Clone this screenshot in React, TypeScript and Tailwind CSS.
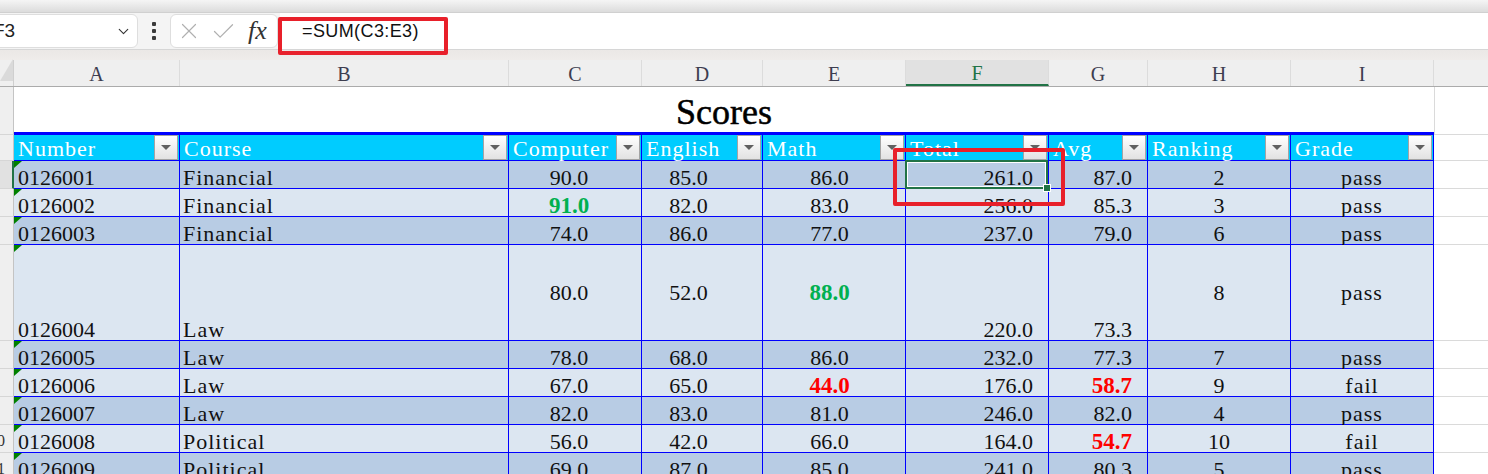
import { Check, ChevronDown, X } from "lucide-react";

type Tone = "green" | "red";
type Cell = string | { v: string; tone: Tone };

interface RowData {
  n: number;
  dark: boolean;
  tall?: boolean;
  cells: Cell[];
}

const SERIF = "font-['Liberation_Serif',serif]";

const COLS = [
  { id: "A", w: "w-[166px]", align: "justify-start pl-[4px]", mid: false },
  { id: "B", w: "w-[329px]", align: "justify-start pl-[3px]", mid: false },
  { id: "C", w: "w-[133px]", align: "justify-center pr-[12px]", mid: true },
  { id: "D", w: "w-[121px]", align: "justify-center pr-[27px]", mid: true },
  { id: "E", w: "w-[143px]", align: "justify-center pr-[9px]", mid: true },
  { id: "F", w: "w-[143px]", align: "justify-end pr-[15px]", mid: false },
  { id: "G", w: "w-[99px]", align: "justify-end pr-[15px]", mid: false },
  { id: "H", w: "w-[143px]", align: "justify-center", mid: true },
  { id: "I", w: "w-[143px]", align: "justify-center", mid: true },
];

const HEADERS = ["Number", "Course", "Computer", "English", "Math", "Total", "Avg", "Ranking", "Grade"];

const ROWS: RowData[] = [
  { n: 3, dark: true, cells: ["0126001", "Financial", "90.0", "85.0", "86.0", "261.0", "87.0", "2", "pass"] },
  { n: 4, dark: false, cells: ["0126002", "Financial", { v: "91.0", tone: "green" }, "82.0", "83.0", "256.0", "85.3", "3", "pass"] },
  { n: 5, dark: true, cells: ["0126003", "Financial", "74.0", "86.0", "77.0", "237.0", "79.0", "6", "pass"] },
  { n: 6, dark: false, tall: true, cells: ["0126004", "Law", "80.0", "52.0", { v: "88.0", tone: "green" }, "220.0", "73.3", "8", "pass"] },
  { n: 7, dark: true, cells: ["0126005", "Law", "78.0", "68.0", "86.0", "232.0", "77.3", "7", "pass"] },
  { n: 8, dark: false, cells: ["0126006", "Law", "67.0", "65.0", { v: "44.0", tone: "red" }, "176.0", { v: "58.7", tone: "red" }, "9", "fail"] },
  { n: 9, dark: true, cells: ["0126007", "Law", "82.0", "83.0", "81.0", "246.0", "82.0", "4", "pass"] },
  { n: 10, dark: false, cells: ["0126008", "Political", "56.0", "42.0", "66.0", "164.0", { v: "54.7", tone: "red" }, "10", "fail"] },
  { n: 11, dark: true, cells: ["0126009", "Political", "69.0", "87.0", "85.0", "241.0", "80.3", "5", "pass"] },
];

function FilterButton() {
  return (
    <div className="w-[24px] h-[25px] mr-[1px] shrink-0 border border-[#a3a3a3] bg-gradient-to-b from-white to-[#e2e2e2] flex items-center justify-center">
      <div className="w-0 h-0 border-l-[5px] border-r-[5px] border-t-[5px] border-l-transparent border-r-transparent border-t-[#606060]" />
    </div>
  );
}

function FormulaBar() {
  return (
    <div className="flex h-[37px] bg-[#f4f4f4] border-b border-[#d6d6d6]">
      {/* Name box */}
      <div className="ml-[-14px] my-[1px] w-[152px] shrink-0 rounded-[6px] bg-white border border-[#dedede] flex items-center justify-between pl-[6px] pr-[5px]">
        <span className="font-['Liberation_Sans',sans-serif] text-[19px] text-[#222]">F3</span>
        <ChevronDown size={17} strokeWidth={1.6} className="text-[#333]" />
      </div>
      <div className="w-[32px] shrink-0 flex flex-col items-center justify-center gap-[3px]">
        <div className="w-[4px] h-[4px] rounded-[1px] bg-[#3a3a3a]" />
        <div className="w-[4px] h-[4px] rounded-[1px] bg-[#3a3a3a]" />
        <div className="w-[4px] h-[4px] rounded-[1px] bg-[#3a3a3a]" />
      </div>
      {/* Cancel / enter / fx */}
      <div className="my-[1px] w-[108px] shrink-0 rounded-[6px] bg-white border border-[#dedede] flex items-center pl-[5px] gap-[8px]">
        <X size={26} strokeWidth={1.1} className="text-[#b0b0b0]" />
        <Check size={27} strokeWidth={1.1} className="text-[#b0b0b0]" />
        <span className={`${SERIF} italic text-[26px] text-[#333] leading-none ml-[3px]`}>fx</span>
      </div>
      {/* Formula input */}
      <div className="flex-1 ml-[2px] bg-white flex items-center pl-[22px]">
        <span className="font-['Liberation_Sans',sans-serif] text-[18px] tracking-[0.4px] text-[#111]">=SUM(C3:E3)</span>
      </div>
    </div>
  );
}

function ColumnHeaders() {
  return (
    <div className="flex h-[27px] bg-[#efefef] border-b border-[#ababab]">
      <div className="w-[14px] shrink-0 relative border-r border-[#cfcfcf]">
        <svg className="absolute left-0 top-[-3px]" width="13" height="26" viewBox="0 0 13 26">
          <polygon points="13,2 13,24 0,24" fill="#dadada" />
        </svg>
      </div>
      {COLS.map((c) => (
        <div
          key={c.id}
          className={`${c.w} shrink-0 flex items-center justify-center pt-[2px] border-r border-[#dcdcdc] ${SERIF} text-[20px] ${
            c.id === "F" ? "bg-[#e1e1e1] text-[#217346] border-b-2 border-b-[#217346]" : "text-[#3d3d4f]"
          }`}
        >
          {c.id}
        </div>
      ))}
      <div className="flex-1" />
    </div>
  );
}

function renderValue(cell: Cell) {
  if (typeof cell === "string") {
    const numeric = /^[\d.]+$/.test(cell);
    return <span className={numeric ? "" : "tracking-[1px]"}>{cell}</span>;
  }
  return (
    <span className={`font-bold text-[23px] ${cell.tone === "green" ? "text-[#00b050]" : "text-[#ff0000]"}`}>
      {cell.v}
    </span>
  );
}

function DataRow({ row }: { row: RowData }) {
  const h = row.tall ? "h-[96px]" : "h-[28px]";
  const bg = row.dark ? "bg-[#b8cce4]" : "bg-[#dce6f1]";
  const selectedRow = row.n === 3;
  return (
    <div className={`flex ${h}`}>
      <div
        className={`w-[14px] shrink-0 overflow-hidden flex items-end justify-end pr-[8px] pb-[1px] border-b border-[#d6d6d6] ${SERIF} text-[16px] leading-[20px] text-[#333] ${
          selectedRow ? "bg-[#e1e1e1] border-r-2 border-r-[#217346]" : "bg-[#efefef] border-r border-r-[#c4c4c4]"
        }`}
      >
        {row.n >= 10 ? row.n : ""}
      </div>
      {COLS.map((c, i) => (
        <div
          key={c.id}
          className={`${c.w} shrink-0 relative flex ${c.align} ${
            row.tall && c.mid ? "items-center" : "items-end"
          } ${bg} border-r border-b border-[#0000ff] ${SERIF} text-[22px] leading-[20px] text-[#111]`}
        >
          {c.id === "A" && (
            <div className="absolute left-0 top-0 w-0 h-0 border-t-[7px] border-t-[#008000] border-r-[8px] border-r-transparent" />
          )}
          {renderValue(row.cells[i])}
          {selectedRow && c.id === "F" && (
            <div className="absolute -left-[1px] -top-[1px] -right-[0px] -bottom-[1px] z-10 border-2 border-[#217346] shadow-[inset_0_0_0_1px_white]">
              <div className="absolute -right-[5px] -bottom-[5px] w-[8px] h-[8px] bg-[#217346] border border-white" />
            </div>
          )}
        </div>
      ))}
      <div className="flex-1 bg-white border-b border-[#dadada]" />
    </div>
  );
}

export default function App() {
  return (
    <div className="relative w-[1488px] h-[474px] overflow-hidden bg-white">
      <div className="h-[13px] bg-gradient-to-b from-[#f5f5f5] to-[#dcdcdc] border-b border-[#d0d0d0]" />
      <FormulaBar />
      <div className="h-[10px] bg-gradient-to-b from-[#ebe8e6] to-[#efecea]" />
      <ColumnHeaders />

      {/* Title row */}
      <div className="flex h-[48px]">
        <div className="w-[14px] shrink-0 bg-[#efefef] border-r border-[#c4c4c4] border-b border-b-[#d6d6d6]" />
        <div className={`w-[1420px] shrink-0 flex items-end justify-center pb-[2px] border-b-[3px] border-[#0000ff] ${SERIF} text-[36px] leading-[35px] text-black [-webkit-text-stroke:0.5px_black]`}>
          Scores
        </div>
        <div className="flex-1 border-l border-b border-[#dadada]" />
      </div>

      {/* Header row */}
      <div className="flex h-[26px]">
        <div className="w-[14px] shrink-0 bg-[#efefef] border-r border-[#c4c4c4] border-b border-b-[#d6d6d6]" />
        {COLS.map((c, i) => (
          <div
            key={c.id}
            className={`${c.w} shrink-0 flex items-end justify-between pl-[4px] bg-[#00ccff] border-r border-b border-[#0000ff] ${SERIF} text-[22px] leading-[20px] text-white tracking-[1px]`}
          >
            <span className="pb-[1px]">{HEADERS[i]}</span>
            <FilterButton />
          </div>
        ))}
        <div className="flex-1 border-b border-[#dadada]" />
      </div>

      {ROWS.map((r) => (
        <DataRow key={r.n} row={r} />
      ))}

      {/* Red annotation boxes */}
      <div className="absolute left-[278px] top-[17px] w-[170px] h-[38px] border-[4px] border-[#e8202a] rounded-[2px] z-20" />
      <div className="absolute left-[893px] top-[148px] w-[172px] h-[58px] border-[4px] border-[#e8202a] rounded-[2px] z-20" />
    </div>
  );
}
